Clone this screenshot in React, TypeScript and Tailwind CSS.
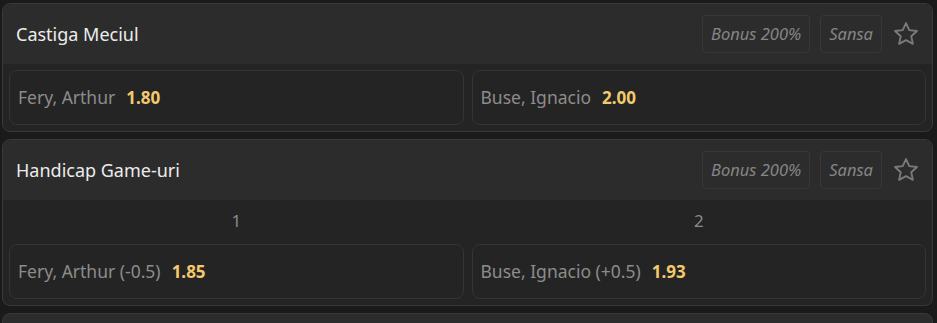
import React from "react";

type Outcome = { name: string; odd: string };

interface MarketProps {
  title: string;
  outcomes: Outcome[];
  labels?: string[];
}

const StarIcon = () => (
  <svg width="28" height="28" viewBox="0 0 24 24" fill="none" stroke="#7a7a7a" strokeWidth="1.6" strokeLinejoin="round">
    <path d="M12 2.6l2.8 6.1 6.6.7-4.9 4.5 1.4 6.6L12 17.2l-5.9 3.3 1.4-6.6-4.9-4.5 6.6-.7z" />
  </svg>
);

const Market: React.FC<MarketProps> = ({ title, outcomes, labels }) => {
  return (
    <div className="shrink-0 rounded-lg border border-[#393939] bg-[#242424] overflow-hidden">
      {/* header */}
      <div className="flex items-center h-[60px] bg-[#2c2c2c] pl-[13px] pr-[12px]">
        <span className="text-[18px] text-[#ececec] pt-[1px]">{title}</span>
        <div className="ml-auto flex items-center gap-[10px]">
          <span className="h-[38px] px-[8px] flex items-center rounded border border-[#383838] text-[16.5px] italic text-[#858585]">
            Bonus 200%
          </span>
          <span className="h-[38px] px-[8px] flex items-center rounded border border-[#383838] text-[16.5px] italic text-[#858585]">
            Sansa
          </span>
          <StarIcon />
        </div>
      </div>

      {/* body */}
      <div className="px-[6px] pt-[6px] pb-[6px]">
        {labels && (
          <div className="grid grid-cols-2 gap-[8px] h-[38px] -mt-[6px] mb-[6px]">
            {labels.map((l) => (
              <div key={l} className="flex items-center justify-center text-[17px] text-[#8a8a8a] pt-[3px]">
                {l}
              </div>
            ))}
          </div>
        )}
        <div className="grid grid-cols-2 gap-[8px]">
          {outcomes.map((o) => (
            <button
              key={o.name}
              className="h-[55px] flex items-center gap-[11px] px-[8px] rounded-lg border border-[#353535] bg-[#242424] text-left"
            >
              <span className="text-[17.5px] text-[#8c8c8c]">{o.name}</span>
              <span className="text-[17px] font-bold text-[#f3c96c]">{o.odd}</span>
            </button>
          ))}
        </div>
      </div>
    </div>
  );
};

export default function App() {
  return (
    <div
      className="w-[937px] h-[323px] overflow-hidden bg-[#1a1a1a] pt-[3px] pl-[2px] pr-[4px] flex flex-col gap-[7px]"
      style={{ fontFamily: '"Noto Sans", "Open Sans", sans-serif' }}
    >
      <Market
        title="Castiga Meciul"
        outcomes={[
          { name: "Fery, Arthur", odd: "1.80" },
          { name: "Buse, Ignacio", odd: "2.00" },
        ]}
      />
      <Market
        title="Handicap Game-uri"
        labels={["1", "2"]}
        outcomes={[
          { name: "Fery, Arthur (-0.5)", odd: "1.85" },
          { name: "Buse, Ignacio (+0.5)", odd: "1.93" },
        ]}
      />
      <div className="shrink-0 h-[60px] rounded-lg border border-[#393939] bg-[#2c2c2c]" />
    </div>
  );
}
